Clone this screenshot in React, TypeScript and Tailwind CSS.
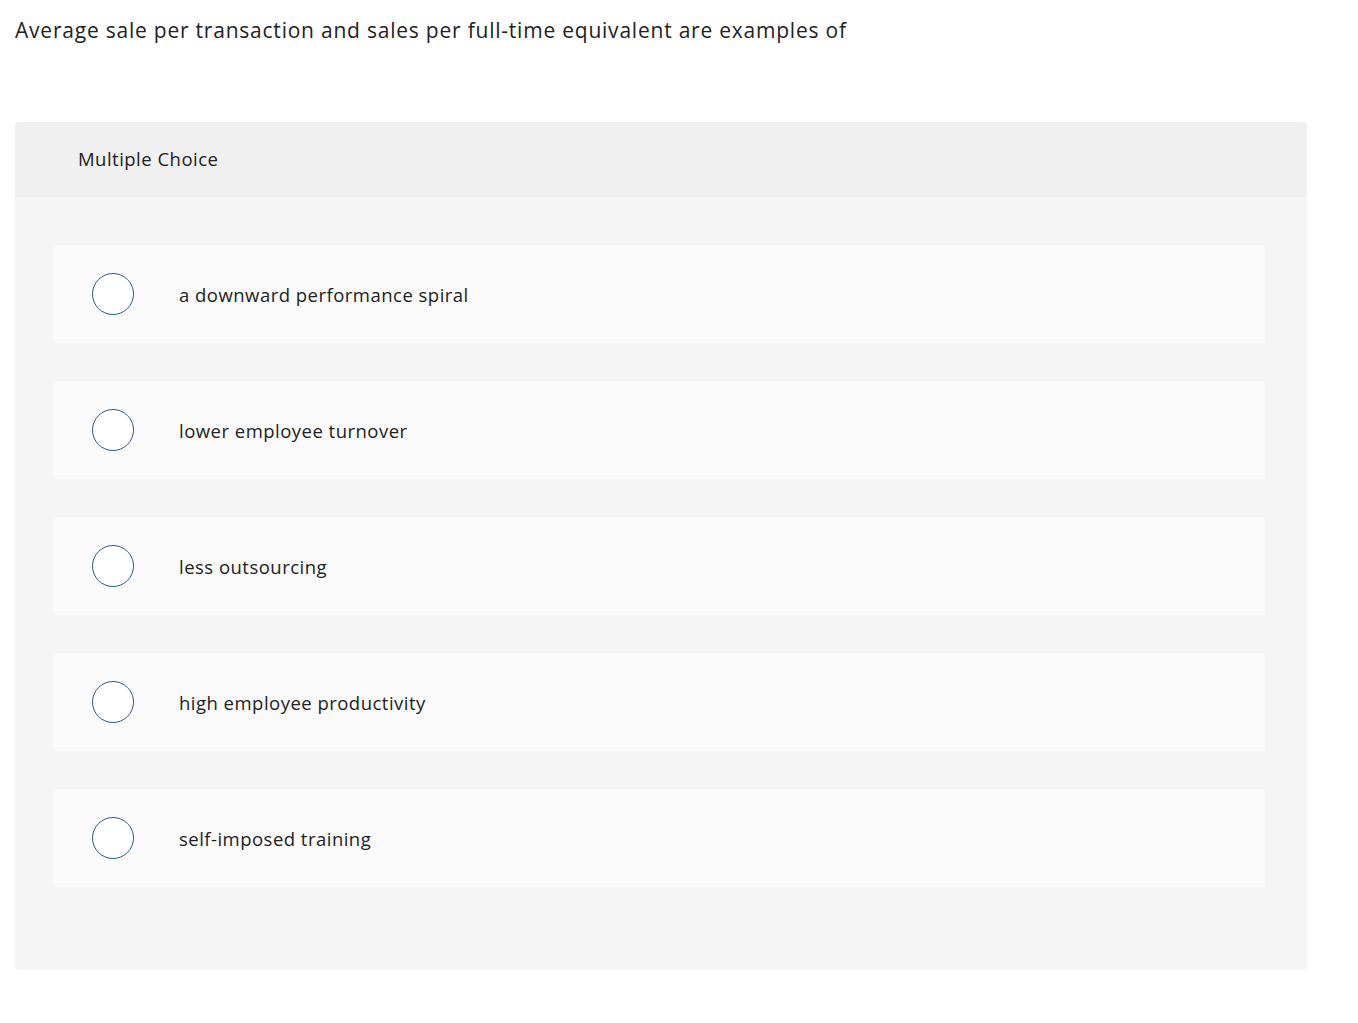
const options = [
  "a downward performance spiral",
  "lower employee turnover",
  "less outsourcing",
  "high employee productivity",
  "self-imposed training",
];

export default function App() {
  return (
    <div
      className="min-h-screen bg-white text-[#1f1f1f] tracking-[0.03em]"
      style={{ fontFamily: '"Open Sans", "Lato", sans-serif' }}
    >
      <div className="px-[15px] pt-[14px]">
        <p className="text-[21px] leading-[32px] text-[#222] tracking-[0.037em]">
          Average sale per transaction and sales per full-time equivalent are examples of
        </p>

        <div className="mt-[76px] w-[1292px] rounded-[4px] bg-[#f5f5f5] overflow-hidden">
          <div className="h-[75px] bg-[#f0f0f0] flex items-center pl-[63px]">
            <span className="text-[18.5px] text-[#222] -mt-[1px]">Multiple Choice</span>
          </div>

          <div className="flex flex-col gap-[38px] pl-[39px] pr-[42px] pt-[48px] pb-[83px]">
            {options.map((opt) => (
              <label
                key={opt}
                className="h-[98px] rounded-[4px] bg-[#fafafa] flex items-center cursor-pointer"
              >
                <span className="ml-[38px] w-[42px] h-[42px] rounded-full border-[1.5px] border-[#2b5b8c] bg-white shrink-0" />
                <span className="ml-[45px] text-[18.5px] text-[#222] mt-[1px]">{opt}</span>
              </label>
            ))}
          </div>
        </div>
      </div>
    </div>
  );
}
